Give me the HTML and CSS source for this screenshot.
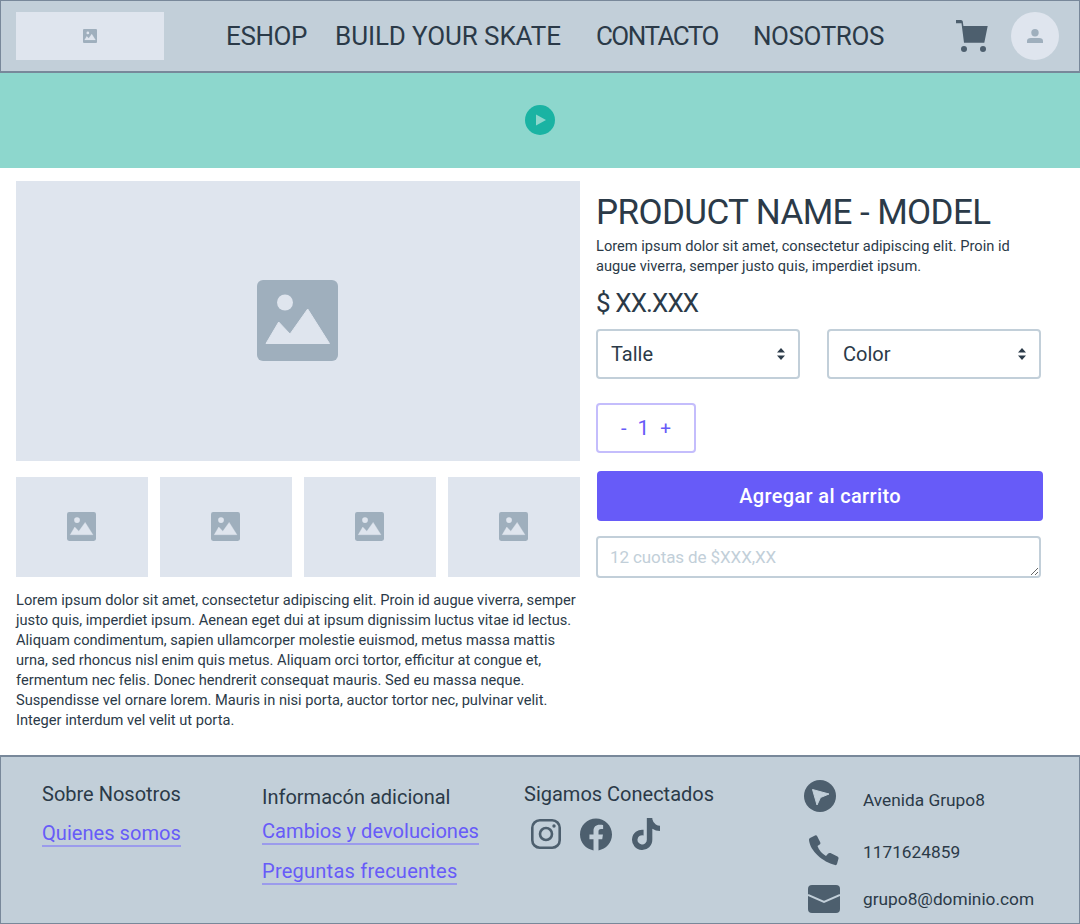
FILE: index.html
```html
<!DOCTYPE html>
<html lang="es">
<head>
<meta charset="utf-8">
<title>Product Name - Model</title>
<link rel="stylesheet" href="styles.css">
</head>
<body>
<svg class="defs" width="0" height="0">
<symbol id="img" viewBox="0 0 81 81">
<path fill="#9fafbd" d="M6 0h69a6 6 0 0 1 6 6v69a6 6 0 0 1-6 6H6a6 6 0 0 1-6-6V6a6 6 0 0 1 6-6z"/>
<circle fill="#dfe5ee" cx="28" cy="22.5" r="8"/>
<path fill="#dfe5ee" stroke="#dfe5ee" stroke-linejoin="round" d="M9 63.5 21.7 42 33 54 50.7 29 72.5 63.5z"/>
</symbol>
</svg>

<header class="topbar">
<div class="logo"><svg class="ico-logo"><use href="#img"/></svg></div>
<nav class="menu">
<a href="#" class="m-eshop">ESHOP</a>
<a href="#" class="m-build">BUILD YOUR SKATE</a>
<a href="#" class="m-contacto">CONTACTO</a>
<a href="#" class="m-nosotros">NOSOTROS</a>
</nav>
<svg class="cart" viewBox="0 0 34 33"><path fill="#4d5f6e" d="M1 0h5q1.500 0 1.800 1.500L8.400 6h24.300l-3.400 16.700H9L6.500 3.200H1z"/><circle fill="#4d5f6e" cx="9" cy="29" r="3"/><circle fill="#4d5f6e" cx="28" cy="29" r="3"/></svg>
<div class="avatar"><svg class="ico-user" viewBox="0 0 16 14"><circle fill="#9fafbd" cx="8" cy="3.800" r="3.700"/><path fill="#9fafbd" d="M0 14v-2q0-3 4-3h8q4 0 4 3v2z"/></svg></div>
</header>

<section class="hero">
<svg class="play" viewBox="0 0 30 30"><circle fill="#1ab3a3" cx="15" cy="15" r="15"/><path fill="#8dd7cd" d="M11 9.500 21 15l-10 5.500z"/></svg>
</section>

<main class="product">
<div class="gallery">
<div class="photo"><svg class="ico-big"><use href="#img"/></svg></div>
<div class="thumbs">
<div class="thumb"><svg class="ico-thumb"><use href="#img"/></svg></div>
<div class="thumb"><svg class="ico-thumb"><use href="#img"/></svg></div>
<div class="thumb"><svg class="ico-thumb"><use href="#img"/></svg></div>
<div class="thumb"><svg class="ico-thumb"><use href="#img"/></svg></div>
</div>
<p class="long">Lorem ipsum dolor sit amet, consectetur adipiscing elit. Proin id augue viverra, semper<br>justo quis, imperdiet ipsum. Aenean eget dui at ipsum dignissim luctus vitae id lectus.<br>Aliquam condimentum, sapien ullamcorper molestie euismod, metus massa mattis<br>urna, sed rhoncus nisl enim quis metus. Aliquam orci tortor, efficitur at congue et,<br>fermentum nec felis. Donec hendrerit consequat mauris. Sed eu massa neque.<br>Suspendisse vel ornare lorem. Mauris in nisi porta, auctor tortor nec, pulvinar velit.<br>Integer interdum vel velit ut porta.</p>
</div>
<div class="info">
<h1>PRODUCT NAME - MODEL</h1>
<p class="short">Lorem ipsum dolor sit amet, consectetur adipiscing elit. Proin id<br>augue viverra, semper justo quis, imperdiet ipsum.</p>
<p class="price">$ XX.XXX</p>
<div class="selects">
<div class="select s-talle">Talle<svg class="updown" viewBox="0 0 8 12"><path fill="#2d3c4a" d="M4 0 8 4.500H0zM4 12 0 7.500h8z"/></svg></div>
<div class="select s-color">Color<svg class="updown" viewBox="0 0 8 12"><path fill="#2d3c4a" d="M4 0 8 4.500H0zM4 12 0 7.500h8z"/></svg></div>
</div>
<div class="qty"><span class="q-minus">-</span><span class="q-num">1</span><span class="q-plus">+</span></div>
<button class="add">Agregar al carrito</button>
<textarea class="cuotas" placeholder="12 cuotas de $XXX,XX"></textarea>
</div>
</main>

<footer class="foot">
<div class="col col-1">
<h3>Sobre Nosotros</h3>
<a href="#">Quienes somos</a>
</div>
<div class="col col-2">
<h3>Informacón adicional</h3>
<a href="#">Cambios y devoluciones</a>
<a href="#">Preguntas frecuentes</a>
</div>
<div class="col col-3">
<h3>Sigamos Conectados</h3>
<div class="social">
<svg class="s-ig" viewBox="0 0 30 30"><rect x="1.300" y="1.300" width="27.400" height="27.400" rx="7.500" fill="none" stroke="#4d5f6e" stroke-width="2.600"/><circle cx="15" cy="15" r="6" fill="none" stroke="#4d5f6e" stroke-width="2.600"/><circle cx="23" cy="7" r="1.700" fill="#4d5f6e"/></svg>
<svg class="s-fb" viewBox="8 8 496 493"><path fill="#4d5f6e" d="M504 256C504 119 393 8 256 8S8 119 8 256c0 123.780 90.690 226.380 209.250 245V327.690h-63V256h63v-54.640c0-62.150 37-96.480 93.670-96.480 27.140 0 55.520 4.840 55.520 4.840v61h-31.280c-30.800 0-40.410 19.120-40.410 38.730V256h68.780l-11 71.690h-57.780V501C413.310 482.380 504 379.780 504 256z"/></svg>
<svg class="s-tt" viewBox="0 0 448 512"><path fill="#4d5f6e" d="M448 209.910a210.060 210.060 0 0 1-122.770-39.250V349.380A162.550 162.550 0 1 1 185 188.310V278.200a74.620 74.620 0 1 0 52.230 71.180V0l88 0a121.180 121.180 0 0 0 1.860 22.170h0A122.180 122.180 0 0 0 381 102.390a121.430 121.430 0 0 0 67 20.140Z"/></svg>
</div>
</div>
<div class="col col-4">
<div class="row r-addr"><span class="slot"><svg class="i-loc" viewBox="0 0 32 32"><circle fill="#4d5f6e" cx="16" cy="16" r="16"/><path fill="#c2cfd9" stroke="#c2cfd9" stroke-linejoin="round" d="M8.500 9.500 25 14 16.500 17.500 13 25z"/></svg></span><span class="r-text">Avenida Grupo8</span></div>
<div class="row r-tel"><span class="slot"><svg class="i-tel" viewBox="0 0 32 32"><path fill="#4d5f6e" d="M2 3 7 .5q1.500-.7 2.200.8l3 6q.6 1.300-.5 2.200L9.500 11q2 6 8.500 10l2.200-2.500q1-1 2.300-.4l7 3.400q1.300.7 1 2l-1.500 5.500q-.5 1.500-2 1C15 27 2 16 1 5q-.1-1.500 1-2z"/></svg></span><span class="r-text">1171624859</span></div>
<div class="row r-mail"><span class="slot"><svg class="i-mail" viewBox="0 0 32 28"><rect fill="#4d5f6e" width="32" height="28" rx="4"/><path fill="none" stroke="#c2cfd9" stroke-width="2" d="M0 10 16 17 32 10"/></svg></span><span class="r-text">grupo8@dominio.com</span></div>
</div>
</footer>
</body>
</html>
```

FILE: styles.css
```css
*{box-sizing:border-box;}
html,body{margin:0;padding:0;}
body{font-family:Roboto,"Liberation Sans",sans-serif;color:#2b3a48;background:#fff;width:1080px;height:924px;overflow:hidden;}
.defs{display:block;height:0;}
a{text-decoration:none;}

.topbar{display:flex;align-items:center;height:73px;padding:0 20px 0 15px;background:#c2cfd9;border:1px solid #78889a;border-bottom-width:2px;}
.logo{display:flex;align-items:center;justify-content:center;width:148px;height:48px;background:#dfe5ee;}
.ico-logo{width:14px;height:14px;}
.menu{display:flex;margin-left:62px;font-size:26px;}
.menu a{color:#2b3a48;white-space:nowrap;}
.m-eshop{letter-spacing:-.4px;}
.m-build{margin-left:28px;letter-spacing:-.1px;}
.m-contacto{margin-left:35px;letter-spacing:-1.5px;}
.m-nosotros{margin-left:35px;letter-spacing:-.4px;}
.cart{width:34px;height:33px;margin-left:auto;}
.avatar{display:flex;align-items:center;justify-content:center;width:48px;height:48px;margin-left:22px;border-radius:50%;background:#dfe5ee;}
.ico-user{width:16px;height:14px;}

.hero{display:flex;align-items:center;justify-content:center;height:95px;background:#8dd7cd;}
.play{width:30px;height:30px;margin-bottom:1px;}

.product{display:flex;height:587px;padding:13px 0 0 16px;}
.gallery{width:564px;}
.photo{display:flex;align-items:center;justify-content:center;height:280px;background:#dfe5ee;}
.ico-big{width:81px;height:81px;margin:0 1px 1px 0;}
.thumbs{display:grid;grid-template-columns:repeat(4,132px);gap:12px;margin-top:16px;}
.thumb{display:flex;align-items:center;justify-content:center;height:100px;background:#dfe5ee;}
.ico-thumb{width:29px;height:29px;margin:0 1px 1px 0;}
.long{margin:13px 0 0;font-size:14.65px;line-height:20px;white-space:nowrap;}

.info{width:447px;margin-left:16px;}
h1{margin:10px 0 0;font-size:35px;font-weight:400;letter-spacing:-.6px;line-height:44px;}
.short{margin:1px 0 0;font-size:14.65px;line-height:20px;}
.price{margin:9px 0 0;font-size:26px;letter-spacing:-.9px;line-height:36px;}
.selects{display:flex;margin-top:8px;}
.select{display:flex;align-items:center;justify-content:space-between;height:50px;padding:0 13px;font-size:20px;background:#fff;border:2px solid #c2cfd9;border-radius:4px;}
.s-talle{width:204px;}
.s-color{width:214px;margin-left:27px;padding-left:14px;}
.updown{width:8px;height:12px;}
.qty{display:flex;align-items:center;width:100px;height:50px;margin-top:24px;padding-left:23px;color:#675bf8;font-size:20px;border:2px solid #c4bdfc;border-radius:4px;}
.q-num{margin-left:11px;font-size:21px;}
.q-plus{margin-left:11px;font-size:19px;}
.add{display:block;width:446px;height:50px;margin:18px 0 0 1px;padding:0;color:#fff;font:500 20px Roboto,"Liberation Sans",sans-serif;letter-spacing:.35px;background:#675bf8;border:0;border-radius:4px;}
.cuotas{display:block;width:445px;height:42px;margin-top:15px;padding:9px 12px 7px;color:#2b3a48;font:400 17px Roboto,"Liberation Sans",sans-serif;letter-spacing:-.1px;background:#fff;border:2px solid #c2cfd9;border-radius:4px;}
.cuotas::placeholder{color:#c2cfd9;opacity:1;}

.foot{display:flex;height:169px;padding-left:41px;background:#c2cfd9;border:1px solid #78889a;border-top-width:2px;}
h3{margin:0;font-size:20px;font-weight:400;line-height:28px;}
.col{display:flex;flex-direction:column;align-items:flex-start;}
.col a{color:#675bf8;font-size:20.1px;line-height:24px;white-space:nowrap;border-bottom:2px solid #9b9bec;}
.col-1{width:220px;padding-top:23px;}
.col-1 a{margin-top:13px;}
.col-2{width:262px;padding-top:26px;}
.col-2 a{margin-top:8px;}
.col-2 a + a{margin-top:14px;letter-spacing:.2px;}
.col-3{width:280px;padding-top:23px;}
.social{display:flex;align-items:center;margin:9px 0 0 7px;}
.s-ig{width:30px;height:30px;}
.s-fb{width:32px;height:33px;margin-left:19px;}
.s-tt{width:28px;height:34px;margin-left:20px;}
.col-4{padding-top:23px;}
.row{display:flex;align-items:center;font-size:17.3px;}
.slot{display:flex;width:59px;}
.r-text{padding-top:2px;}
.r-addr{height:32px;}
.r-addr .r-text{margin-top:6px;}
.r-tel{height:32px;margin-top:23px;}
.r-mail{height:28px;margin-top:18px;}
.r-mail .r-text{margin-bottom:2px;}
.i-loc{width:32px;height:32px;}
.i-tel{width:32px;height:32px;margin-left:4px;}
.i-mail{width:32px;height:28px;margin-left:4px;}
```
